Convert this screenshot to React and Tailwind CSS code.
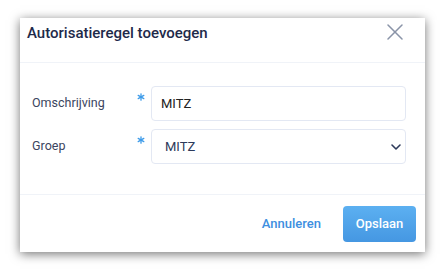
import { ChevronDown } from "lucide-react";

const Star = () => (
  <svg width="8" height="8" viewBox="0 0 8 8" className="text-[#3d9be9]">
    <g stroke="currentColor" strokeWidth="1.3" strokeLinecap="round">
      <line x1="4" y1="0.8" x2="4" y2="7.2" />
      <line x1="1.2" y1="2.4" x2="6.8" y2="5.6" />
      <line x1="1.2" y1="5.6" x2="6.8" y2="2.4" />
    </g>
  </svg>
);

const Row = ({ label, children }) => (
  <div className="flex items-stretch h-[35px]">
    <div className="w-[117px] pl-[12px] flex items-center text-[12.5px] text-[#3b4560]">
      {label}
    </div>
    <div className="w-[14px] pt-[7px]">
      <Star />
    </div>
    {children}
  </div>
);

export default function App() {
  return (
    <div
      className="w-[446px] h-[271px] bg-white pt-[18px] pl-[20px]"
      style={{ fontFamily: "Roboto, 'Liberation Sans', sans-serif" }}
    >
      <div className="w-[405px] h-[234px] bg-white flex flex-col shadow-[0_2px_10px_rgba(0,0,0,0.55)]">
        <div className="h-[45px] border-b border-[#f0f3f8] flex items-start justify-between pl-[7px] pr-[22px] pt-[4px]">
          <h2 className="text-[15px] font-medium text-[#1e2a4a]">
            Autorisatieregel toevoegen
          </h2>
          <svg width="16" height="16" viewBox="0 0 16 16" className="text-[#8a94a8] mt-[2px]">
            <g stroke="currentColor" strokeWidth="1.5" strokeLinecap="round">
              <line x1="1" y1="1" x2="15" y2="15" />
              <line x1="15" y1="1" x2="1" y2="15" />
            </g>
          </svg>
        </div>
        <div className="flex-1 pt-[23px] flex flex-col gap-[8px] border-b border-[#f0f3f8]">
          <Row label="Omschrijving">
            <div className="w-[255px] border border-[#e3e8f3] rounded-[4px] flex items-center px-[9px] text-[13px] text-[#222]">
              MITZ
            </div>
          </Row>
          <Row label="Groep">
            <div className="w-[255px] border border-[#e3e8f3] rounded-[4px] flex items-center justify-between pl-[13px] pr-[1px] text-[13px] text-[#2d3a5a]">
              <span>MITZ</span>
              <ChevronDown size={16} strokeWidth={2.4} className="text-[#2d3a5a]" />
            </div>
          </Row>
        </div>
        <div className="h-[57px] flex items-center justify-end pr-[9px] gap-[22px]">
          <span className="text-[13px] font-medium text-[#3d8fe0]">Annuleren</span>
          <button className="w-[73px] h-[36px] rounded-[4px] bg-gradient-to-b from-[#5cb0f1] to-[#4597e2] text-white text-[13px] font-medium">
            Opslaan
          </button>
        </div>
      </div>
    </div>
  );
}
